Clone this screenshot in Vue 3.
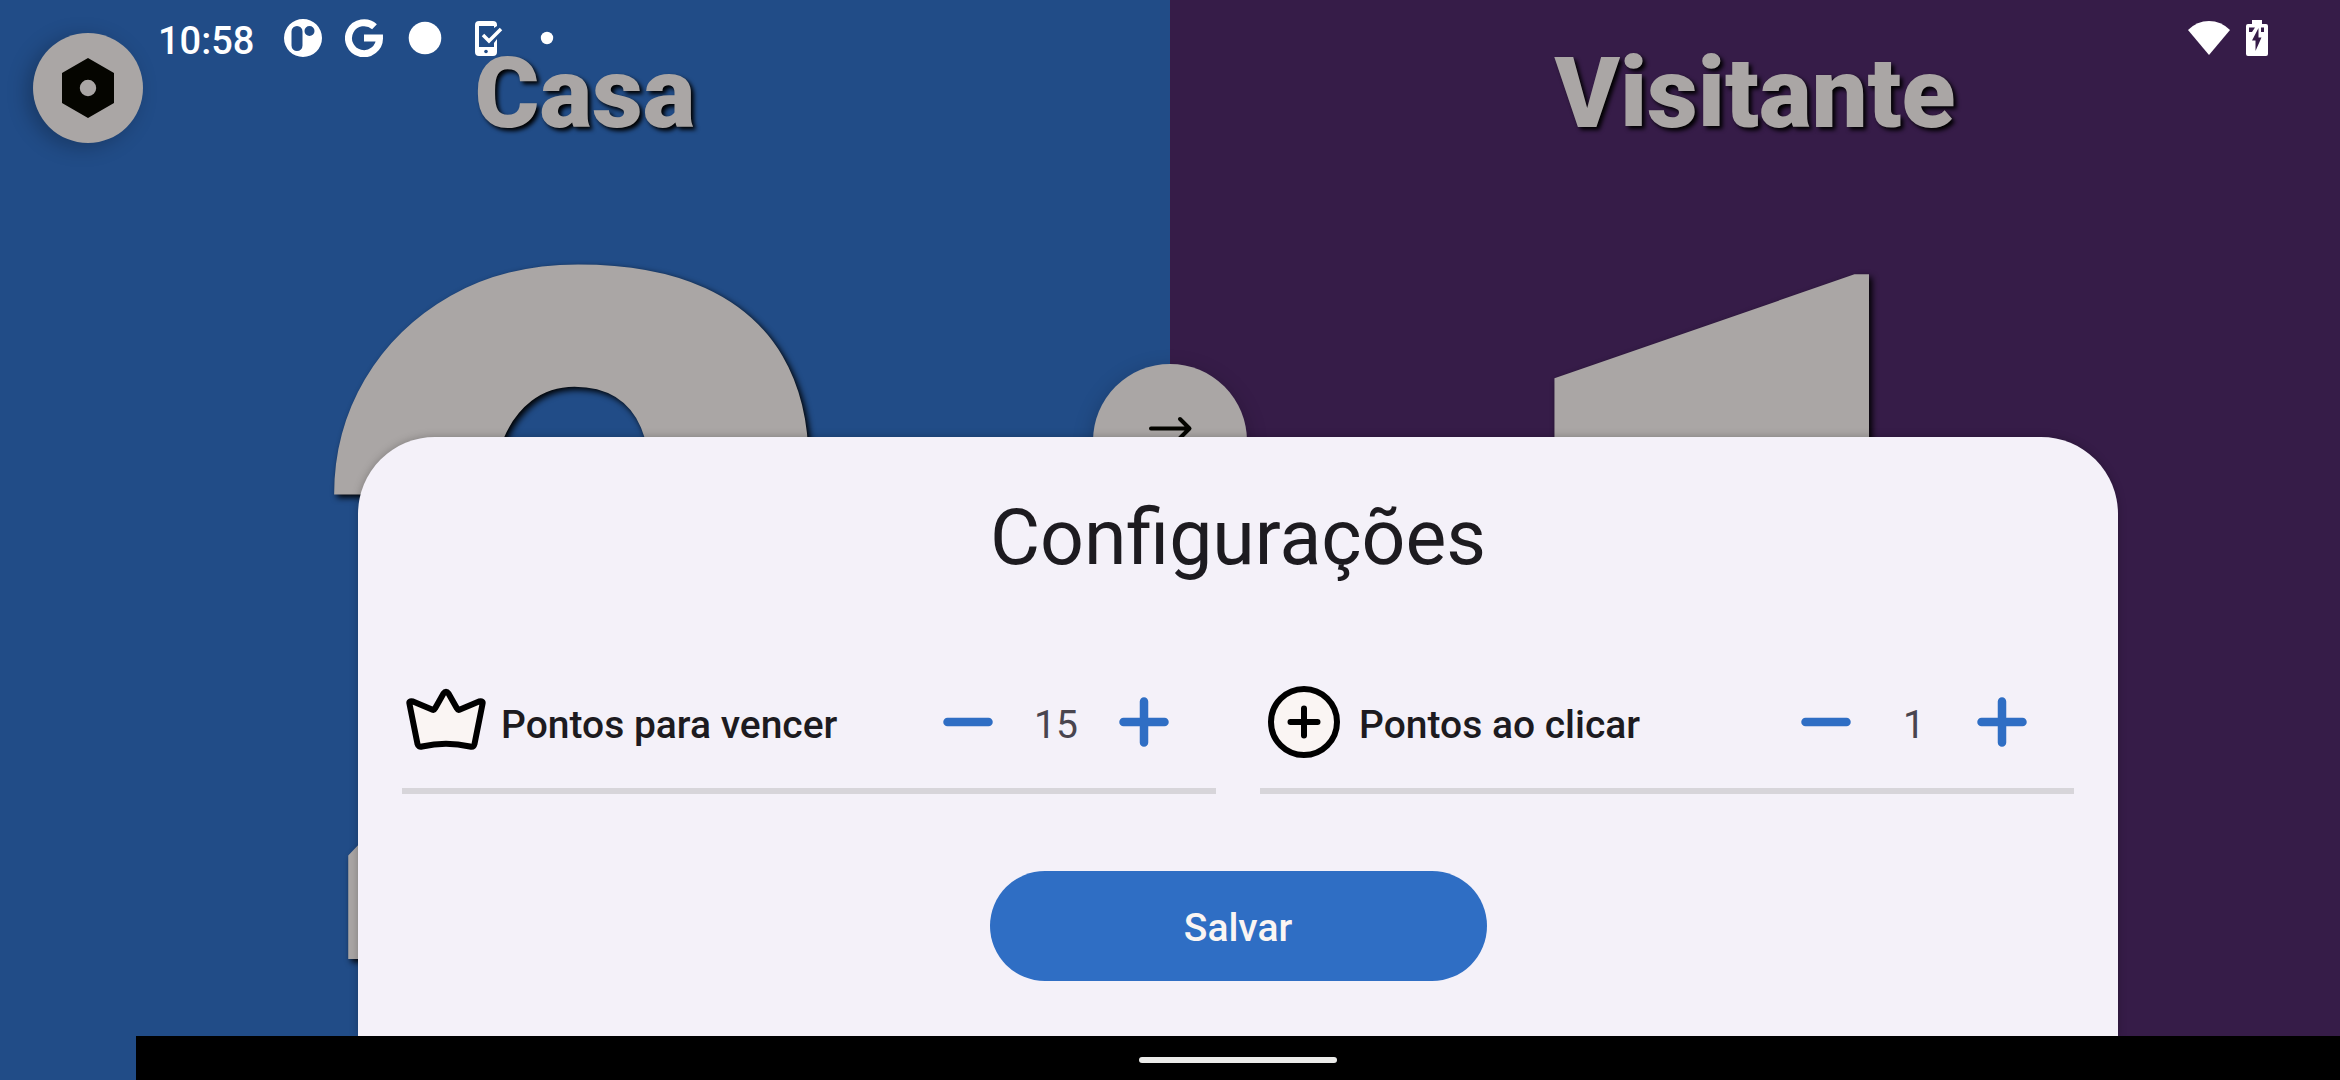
<script setup>
import { reactive } from 'vue'

const teams = [
  { id: 'home', name: 'Casa', score: 2 },
  { id: 'away', name: 'Visitante', score: 1 },
]

const settings = reactive([
  { id: 'win', label: 'Pontos para vencer', icon: 'crown', value: 15 },
  { id: 'tap', label: 'Pontos ao clicar', icon: 'plus', value: 1 },
])

function change(item, step) {
  item.value = Math.max(1, Number(item.value) + step)
}
</script>

<template>
  <div class="app">
    <main class="board">
      <section v-for="team in teams" :key="team.id" class="team" :class="team.id">
        <h2 class="team-name">{{ team.name }}</h2>
        <div class="score"><span>{{ team.score }}</span></div>
      </section>
    </main>

    <button class="round settings-button" type="button" aria-label="Abrir configurações">
      <svg width="54" height="60" viewBox="0 0 54 60" aria-hidden="true">
        <path fill="#050500" fill-rule="evenodd" d="M27 0 53 15V45L27 60 1 45V15ZM27 21.800a8.200 8.200 0 1 0 0 16.400 8.200 8.200 0 0 0 0-16.400Z" />
      </svg>
    </button>

    <button class="round swap-button" type="button" aria-label="Trocar lados">
      <svg width="66" height="66" viewBox="0 0 66 66" fill="none" stroke="#050500" stroke-width="4" stroke-linecap="round" stroke-linejoin="round" aria-hidden="true">
        <path d="M14 20.500H52M43 11l9.500 9.500L43 30M52 45.500H14M23 36l-9.500 9.500L23 55" />
      </svg>
    </button>

    <header class="status">
      <time class="clock">10:58</time>
      <div class="notifications">
        <svg width="38" height="38" viewBox="0 0 38 38" aria-hidden="true">
          <path fill="#fff" fill-rule="evenodd" d="M19 0a19 19 0 1 1 0 38 19 19 0 0 1 0-38ZM13 7a5.500 5.500 0 0 0-5.500 5.500v14a5.500 5.500 0 0 0 11 0v-14A5.500 5.500 0 0 0 13 7ZM25.500 7a5 5 0 1 0 0 10 5 5 0 0 0 0-10Z" />
        </svg>
        <svg width="38" height="38" viewBox="0 0 38 38" aria-hidden="true">
          <path fill="none" stroke="#fff" stroke-width="7" d="M29.500 7.800A15.500 15.500 0 1 0 34.500 19H19" />
        </svg>
        <svg width="38" height="38" viewBox="0 0 38 38" aria-hidden="true">
          <circle cx="19" cy="19" r="16.300" fill="#fff" />
        </svg>
        <svg width="38" height="38" viewBox="0 0 38 38" aria-hidden="true">
          <path fill="#fff" fill-rule="evenodd" d="M12 2h14q4 0 4 4v1l-3 2V7H12v21h15v-4l3-4v13q0 4-4 4H12q-4 0-4-4V6q0-4 4-4Z" />
          <circle cx="19" cy="32.500" r="1.800" fill="#214c87" />
          <path fill="none" stroke="#fff" stroke-width="3.500" d="m16 16 6 6L34 10" />
        </svg>
        <svg width="38" height="38" viewBox="0 0 38 38" aria-hidden="true">
          <circle cx="19" cy="19" r="6.200" fill="#fff" />
        </svg>
      </div>
      <div class="system">
        <svg width="42" height="36" viewBox="0 0 42 36" aria-hidden="true">
          <path fill="#fff" d="M0 10Q9 1 21 1t21 9L21 35Z" />
        </svg>
        <svg width="22" height="36" viewBox="0 0 22 36" aria-hidden="true">
          <path fill="#fff" d="M6 0h10v4h4q2 0 2 2v28q0 2-2 2H2q-2 0-2-2V6q0-2 2-2h4Z" />
          <path fill="#361c48" d="M3 7.500h6L6 12H3ZM15 7.500h3V12h-3ZM12.500 8v9.500h3L9.500 31V20.500H6Z" />
        </svg>
      </div>
    </header>

    <div class="sheet-area">
      <section class="sheet" role="dialog" aria-labelledby="sheet-title">
        <h1 id="sheet-title" class="title">Configurações</h1>
        <form class="form" @submit.prevent>
          <div class="fields">
            <div v-for="item in settings" :key="item.id" class="field">
              <svg v-if="item.icon === 'crown'" class="field-icon" viewBox="0 0 88 88" fill="#faf5f3" stroke="#000" stroke-width="6" stroke-linejoin="round" stroke-linecap="round" aria-hidden="true">
                <path d="M7.500 26Q6.500 22.500 11 23.500L30 31.500Q32 32.500 33 30.500L41.500 15.500Q44 12 46.500 15.500L55 30.500Q56 32.500 58 31.500L77 23.500Q81.500 22.500 80.500 26L72.500 66Q71.500 69.500 68 68.500Q44 63 20 68.500Q16.500 69.500 15.500 66Z" />
              </svg>
              <svg v-else class="field-icon" viewBox="0 0 88 88" fill="#faf5f3" stroke="#000" stroke-width="6" stroke-linecap="round" aria-hidden="true">
                <circle cx="44" cy="44" r="33" />
                <path d="M30.500 44h27M44 30.500v27" />
              </svg>
              <label class="field-label" :for="item.id">{{ item.label }}</label>
              <div class="stepper">
                <button class="step" type="button" aria-label="Diminuir" @click="change(item, -1)">
                  <svg width="52" height="52" viewBox="0 0 52 52" stroke="#2f6ec4" stroke-width="8.500" stroke-linecap="round" aria-hidden="true">
                    <path d="M5.500 26h41" />
                  </svg>
                </button>
                <input :id="item.id" v-model="item.value" class="value" type="text" inputmode="numeric" />
                <button class="step" type="button" aria-label="Aumentar" @click="change(item, 1)">
                  <svg width="52" height="52" viewBox="0 0 52 52" stroke="#2f6ec4" stroke-width="8.500" stroke-linecap="round" aria-hidden="true">
                    <path d="M5.500 26h41M26 5.500v41" />
                  </svg>
                </button>
              </div>
            </div>
          </div>
          <button class="save" type="submit">Salvar</button>
        </form>
      </section>
      <footer class="nav"><span class="handle"></span></footer>
    </div>
  </div>
</template>

<style>
body {
  margin: 0;
}
</style>

<style scoped>
.app {
  position: relative;
  min-height: 100vh;
  overflow: hidden;
  font-family: Roboto, "Liberation Sans", sans-serif;
  color: #1d1b20;
}

.app *,
.app {
  box-sizing: border-box;
}

button {
  border: 0;
  padding: 0;
  font: inherit;
  cursor: pointer;
}

svg {
  display: block;
  flex: none;
}

.board {
  display: grid;
  grid-template-columns: 1fr 1fr;
  height: 100vh;
}

.team {
  display: flex;
  flex-direction: column;
  align-items: center;
  overflow: hidden;
  padding-top: 35px;
  font-weight: 900;
  color: #aaa6a5;
}

.home {
  background: #214c87;
}

.away {
  background: #361c48;
}

.team-name {
  margin: 0 0 30px;
  font-size: 99px;
  line-height: 116px;
  font-weight: 900;
  text-shadow: 3px 3px 4px #000;
}

.score {
  display: flex;
  flex: 1;
  align-items: center;
  min-height: 0;
  font-size: 963px;
  line-height: 1;
  text-shadow: 3px 3px 6px #000;
}

.round {
  position: absolute;
  display: flex;
  align-items: center;
  justify-content: center;
  border-radius: 50%;
  background: #aaa6a5;
}

.settings-button {
  top: 33px;
  left: 33px;
  width: 110px;
  height: 110px;
  box-shadow: -6px 4px 20px rgba(0, 0, 0, 0.25);
}

.swap-button {
  top: 364px;
  left: calc(50% - 77px);
  width: 154px;
  height: 154px;
  box-shadow: 0 6px 20px rgba(0, 0, 0, 0.25);
}

.status {
  position: absolute;
  top: 0;
  left: 0;
  right: 0;
  display: flex;
  align-items: center;
  height: 76px;
  padding: 0 72px 0 158px;
  color: #fff;
}

.clock {
  width: 126px;
  padding-top: 6px;
  font-size: 38px;
  font-weight: 500;
  line-height: 44px;
}

.notifications {
  display: flex;
  gap: 23px;
}

.system {
  display: flex;
  gap: 16px;
  margin-left: auto;
}

.sheet-area {
  position: absolute;
  left: 136px;
  right: 0;
  bottom: 0;
}

.sheet {
  max-width: 1760px;
  margin: 0 auto;
  padding: 52px 44px 55px;
  border-radius: 77px 77px 0 0;
  background: #f4f1f9;
  box-shadow: 0 0 8px rgba(0, 0, 0, 0.25);
}

.title {
  margin: 0 0 68px;
  font-size: 77px;
  font-weight: 400;
  line-height: 99px;
  text-align: center;
}

.form {
  display: flex;
  flex-direction: column;
  align-items: center;
  gap: 77px;
}

.fields {
  display: grid;
  grid-template-columns: 1fr 1fr;
  gap: 44px;
  width: 100%;
}

.field {
  display: flex;
  align-items: center;
  gap: 11px;
  padding: 22px 28px 22px 0;
  border-bottom: 6px solid #d7d5da;
}

.field-icon {
  width: 88px;
  height: 88px;
}

.field-label {
  padding-top: 6px;
  font-size: 39px;
  font-weight: 500;
  line-height: 55px;
}

.stepper {
  display: flex;
  align-items: center;
  margin-left: auto;
}

.step {
  display: flex;
  align-items: center;
  justify-content: center;
  width: 88px;
  height: 88px;
  background: none;
}

.value {
  width: 88px;
  height: 61px;
  border: 0;
  padding: 6px 0 0;
  background: none;
  color: #49454f;
  font: 400 39px/55px Roboto, "Liberation Sans", sans-serif;
  text-align: center;
}

.save {
  width: 497px;
  max-width: 100%;
  height: 110px;
  padding-top: 4px;
  border-radius: 55px;
  background: #2f6ec4;
  color: #faf5f3;
  font-size: 39px;
  font-weight: 500;
}

.nav {
  display: flex;
  align-items: center;
  justify-content: center;
  height: 44px;
  padding-top: 4px;
  background: #000;
  position: relative;
}

.handle {
  width: 198px;
  height: 6px;
  border-radius: 3px;
  background: #ebebe9;
}
</style>
